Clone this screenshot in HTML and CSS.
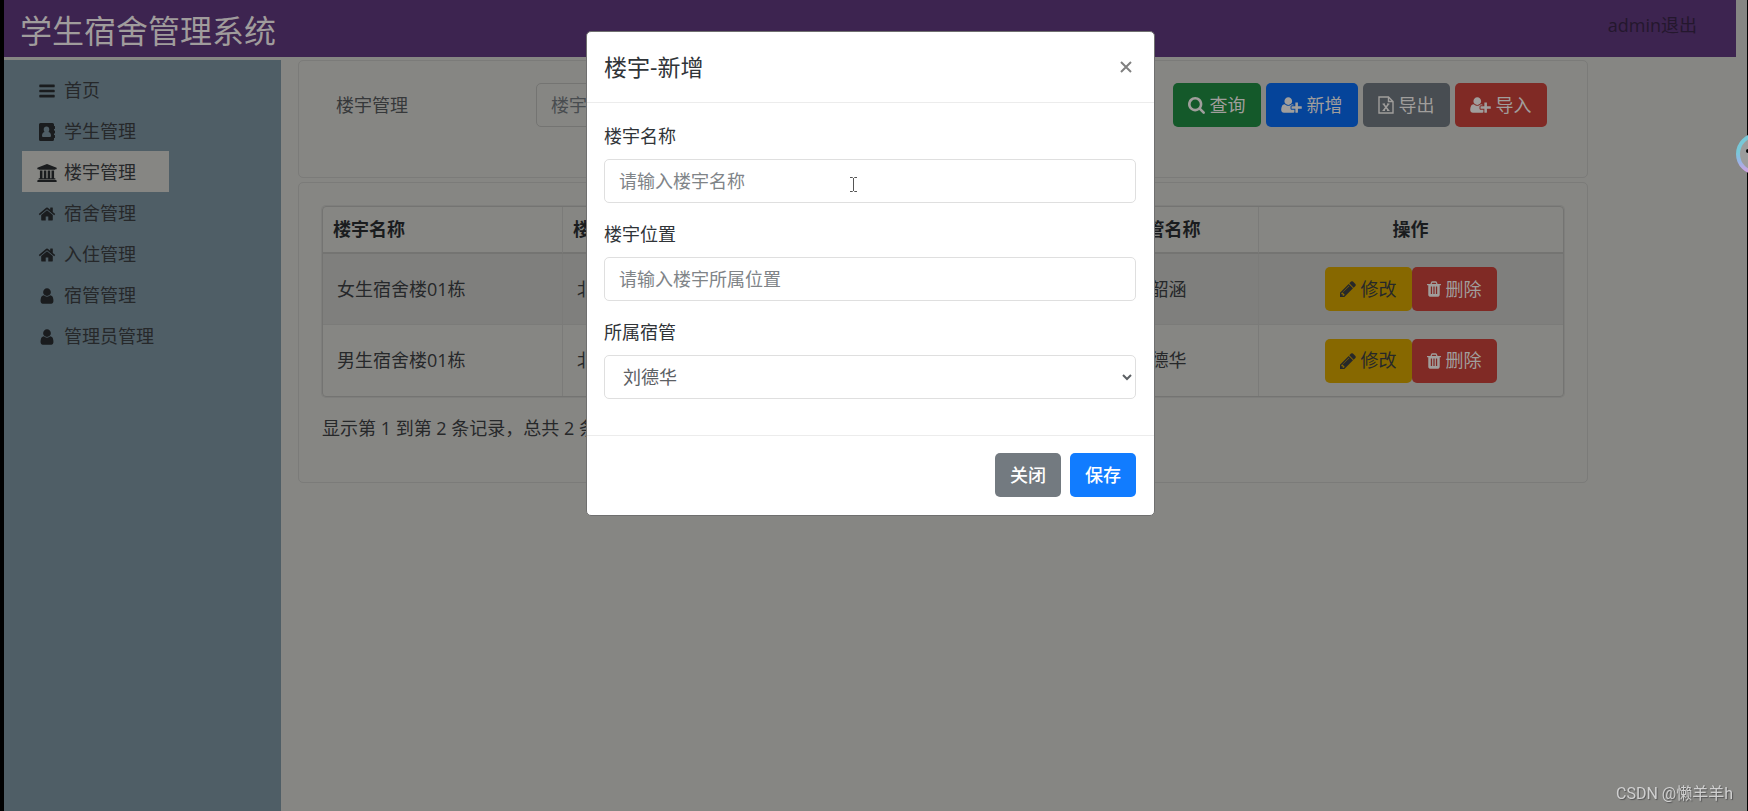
FILE: index.html
```html
<!DOCTYPE html>
<html lang="zh-CN">
<head>
<meta charset="utf-8">
<title>学生宿舍管理系统</title>
<link rel="stylesheet" href="styles.css">
</head>
<body>
<svg class="sprite" aria-hidden="true">
  <symbol id="bars" viewBox="0 0 1792 1792"><path d="M1664 1344v128q0 26-19 45t-45 19h-1408q-26 0-45-19t-19-45v-128q0-26 19-45t45-19h1408q26 0 45 19t19 45zm0-512v128q0 26-19 45t-45 19h-1408q-26 0-45-19t-19-45v-128q0-26 19-45t45-19h1408q26 0 45 19t19 45zm0-512v128q0 26-19 45t-45 19h-1408q-26 0-45-19t-19-45v-128q0-26 19-45t45-19h1408q26 0 45 19t19 45z"/></symbol>
  <symbol id="book" viewBox="0 0 18 18"><path fill-rule="evenodd" d="M2.500 0h12a1.500 1.500 0 0 1 1.500 1.500V3h.6q.4 0 .4.400v2.200q0 .4-.4.400H16v1.500h.6q.4 0 .4.400v2.200q0 .4-.4.400H16V12h.6q.4 0 .4.400v2.200q0 .4-.4.400H16v1.500a1.500 1.500 0 0 1-1.500 1.500h-12A1.500 1.500 0 0 1 1 16.500v-15A1.500 1.500 0 0 1 2.500 0zM8.500 3.500C6.800 3.500 5.700 4.800 5.700 6.500q0 1.500.8 2.400C4.500 9.500 4 11 4 13q0 1 1 1h7q1 0 1-1c0-2-.5-3.500-2.500-4.100q.8-.9.800-2.400C11.300 4.800 10.200 3.500 8.500 3.500z"/></symbol>
  <symbol id="university" viewBox="0 0 1920 1792"><path d="M960 0l960 384v128h-128q0 26-20.500 45t-48.500 19h-1526q-28 0-48.500-19t-20.500-45h-128v-128zm-704 640h256v768h128v-768h256v768h128v-768h256v768h128v-768h256v768h59q28 0 48.500 19t20.500 45v64h-1664v-64q0-26 20.500-45t48.500-19h59zm1595 960q28 0 48.500 19t20.500 45v128h-1920v-128q0-26 20.500-45t48.500-19z"/></symbol>
  <symbol id="home" viewBox="0 0 1792 1792"><path d="M1472 992v480q0 26-19 45t-45 19h-384v-384h-256v384h-384q-26 0-45-19t-19-45v-480q0-1 .5-3t.5-3l575-474 575 474q1 2 1 6zm223-69l-62 74q-8 9-21 11h-3q-13 0-21-7l-692-577-692 577q-12 8-24 7-13-2-21-11l-62-74q-8-10-7-23.500t11-21.500l719-599q32-26 76-26t76 26l244 204v-195q0-14 9-23t23-9h192q14 0 23 9t9 23v408l219 182q10 8 11 21.500t-7 23.500z"/></symbol>
  <symbol id="user" viewBox="0 0 1792 1792"><path d="M1536 1399q0 109-62.500 187t-150.500 78h-854q-88 0-150.500-78t-62.500-187q0-85 8.500-160.500t31.500-152 58.500-131 94-89 134.500-34.500q131 128 313 128t313-128q76 0 134.500 34.500t94 89 58.500 131 31.500 152 8.500 160.500zm-256-887q0 159-112.500 271.500t-271.500 112.500-271.500-112.500-112.500-271.500 112.500-271.500 271.500-112.500 271.500 112.500 112.500 271.500z"/></symbol>
  <symbol id="search" viewBox="64 128 1664 1664"><path d="M1216 832q0-185-131.500-316.500t-316.500-131.500-316.500 131.500-131.500 316.500 131.500 316.500 316.500 131.500 316.500-131.500 131.500-316.500zm512 832q0 52-38 90t-90 38q-54 0-90-38l-343-342q-179 124-399 124-143 0-273.500-55.500t-225-150-150-225-55.500-273.500 55.500-273.500 150-225 225-150 273.500-55.500 273.500 55.500 225 150 150 225 55.500 273.500q0 220-124 399l343 343q37 37 37 90z"/></symbol>
  <symbol id="user-plus" viewBox="0 0 2048 1792"><path d="M704 896q-159 0-271.500-112.500t-112.500-271.500 112.500-271.500 271.500-112.500 271.500 112.500 112.500 271.500-112.500 271.500-271.500 112.500zm960 128h352q13 0 22.500 9.500t9.500 22.500v192q0 13-9.500 22.500t-22.500 9.500h-352v352q0 13-9.500 22.500t-22.500 9.500h-192q-13 0-22.500-9.500t-9.500-22.500v-352h-352q-13 0-22.500-9.500t-9.500-22.500v-192q0-13 9.500-22.500t22.500-9.500h352v-352q0-13 9.500-22.500t22.500-9.500h192q13 0 22.500 9.500t9.500 22.500zm-736 224q0 52 38 90t90 38h256v238q-68 50-171 50h-874q-121 0-194-69t-73-190q0-53 3.500-103.500t14-109 26.500-108.500 43-97.500 62-81 85.500-53.500 111.500-20q19 0 39 17 79 61 154.500 91.500t164.500 30.500 164.500-30.500 154.500-91.500q20-17 39-17 132 0 217 96h-223q-52 0-90 38t-38 90z"/></symbol>
  <symbol id="excel" viewBox="0 0 16 18"><g fill="none" stroke="currentColor" stroke-width="1.400"><path d="M1 1h9.500L15 5.500V17H1zM10.500 1v4.500H15"/><path d="M5.500 8l5 6.500M10.500 8l-5 6.500" stroke-width="1.500"/><path d="M4.500 8h2.500M9 8h2.500M4.500 14.500H7M9 14.500h2.500" stroke-width="1"/></g></symbol>
  <symbol id="pencil" viewBox="128 128 1536 1536"><path d="M491 1536l91-91-235-235-91 91v107h128v128h107zm523-928q0-22-22-22-10 0-17 7l-542 542q-7 7-7 17 0 22 22 22 10 0 17-7l542-542q7-7 7-17zm-54-192l416 416-832 832h-416v-416zm683 96q0 53-37 90l-166 166-416-416 166-165q36-38 90-38 53 0 91 38l235 234q37 39 37 91z"/></symbol>
  <symbol id="trash" viewBox="192 128 1408 1536"><path d="M704 1376v-704q0-14-9-23t-23-9h-64q-14 0-23 9t-9 23v704q0 14 9 23t23 9h64q14 0 23-9t9-23zm256 0v-704q0-14-9-23t-23-9h-64q-14 0-23 9t-9 23v704q0 14 9 23t23 9h64q14 0 23-9t9-23zm256 0v-704q0-14-9-23t-23-9h-64q-14 0-23 9t-9 23v704q0 14 9 23t23 9h64q14 0 23-9t9-23zm-544-992h448l-48-117q-7-9-17-11h-317q-10 2-17 11zm928 32v64q0 14-9 23t-23 9h-96v948q0 83-47 143.500t-113 60.500h-832q-66 0-113-58.500t-47-141.500v-952h-96q-14 0-23-9t-9-23v-64q0-14 9-23t23-9h309l70-167q15-37 54-63t79-26h320q40 0 79 26t54 63l70 167h309q14 0 23 9t9 23z"/></symbol>
</svg>

<header class="topbar">
  <h1 class="brand">学生宿舍管理系统</h1>
  <div class="account">admin<a href="#">退出</a></div>
</header>

<div class="layout">
  <nav class="sidebar">
    <a class="menu-item" href="#"><svg class="menu-icon"><use href="#bars"/></svg>首页</a>
    <a class="menu-item" href="#"><svg class="menu-icon"><use href="#book"/></svg>学生管理</a>
    <a class="menu-item active" href="#"><svg class="menu-icon"><use href="#university"/></svg>楼宇管理</a>
    <a class="menu-item" href="#"><svg class="menu-icon"><use href="#home"/></svg>宿舍管理</a>
    <a class="menu-item" href="#"><svg class="menu-icon"><use href="#home"/></svg>入住管理</a>
    <a class="menu-item" href="#"><svg class="menu-icon"><use href="#user"/></svg>宿管管理</a>
    <a class="menu-item" href="#"><svg class="menu-icon"><use href="#user"/></svg>管理员管理</a>
  </nav>

  <main class="content">
    <form class="card search">
      <label class="search-label" for="keyword">楼宇管理</label>
      <input class="control search-input" id="keyword" type="text" placeholder="楼宇名称">
      <div class="tools">
        <button type="button" class="btn green"><svg class="i17"><use href="#search"/></svg>查询</button>
        <button type="button" class="btn blue"><svg class="i21"><use href="#user-plus"/></svg>新增</button>
        <button type="button" class="btn gray"><svg class="i16"><use href="#excel"/></svg>导出</button>
        <button type="button" class="btn red"><svg class="i21"><use href="#user-plus"/></svg>导入</button>
      </div>
    </form>

    <section class="card list">
      <table class="grid">
        <thead>
          <tr><th class="c-name">楼宇名称</th><th>楼宇位置</th><th class="c-keeper">宿管名称</th><th class="c-ops">操作</th></tr>
        </thead>
        <tbody>
          <tr>
            <td>女生宿舍楼01栋</td><td>北区</td><td>张韶涵</td>
            <td class="ops"><div class="pair"><button type="button" class="btn yellow"><svg class="i16"><use href="#pencil"/></svg>修改</button><button type="button" class="btn red"><svg class="i14"><use href="#trash"/></svg>删除</button></div></td>
          </tr>
          <tr>
            <td>男生宿舍楼01栋</td><td>北区</td><td>刘德华</td>
            <td class="ops"><div class="pair"><button type="button" class="btn yellow"><svg class="i16"><use href="#pencil"/></svg>修改</button><button type="button" class="btn red"><svg class="i14"><use href="#trash"/></svg>删除</button></div></td>
          </tr>
        </tbody>
      </table>
      <p class="summary">显示第 1 到第 2 条记录，总共 2 条记录</p>
    </section>
  </main>
</div>

<div class="overlay">
  <form class="modal" role="dialog" aria-labelledby="modal-title">
    <div class="modal-head">
      <h2 class="modal-title" id="modal-title">楼宇-新增</h2>
      <button type="button" class="close" aria-label="关闭"><svg viewBox="0 0 12 12"><path d="M1 1l10 10M11 1L1 11"/></svg></button>
    </div>
    <div class="modal-body">
      <div class="field">
        <label for="name">楼宇名称</label>
        <input class="control" id="name" type="text" placeholder="请输入楼宇名称">
      </div>
      <div class="field">
        <label for="place">楼宇位置</label>
        <input class="control" id="place" type="text" placeholder="请输入楼宇所属位置">
      </div>
      <div class="field">
        <label for="keeper">所属宿管</label>
        <select class="control" id="keeper"><option>刘德华</option><option>张韶涵</option></select>
      </div>
    </div>
    <div class="modal-foot">
      <button type="button" class="btn dismiss">关闭</button>
      <button type="button" class="btn save">保存</button>
    </div>
  </form>
</div>

<svg class="pointer" viewBox="0 0 9 17"><path d="M1 1.500h2.500l1 1 1-1H8M4.500 2v13M1 15.500h2.500l1-1 1 1H8"/></svg>
<svg class="helper" viewBox="0 0 42 42">
  <defs><linearGradient id="ring" x1="0" y1="0" x2="0" y2="1"><stop offset=".45" stop-color="#78c8d8"/><stop offset=".7" stop-color="#96b4e6"/><stop offset="1" stop-color="#d8a0e0"/></linearGradient></defs>
  <circle cx="21" cy="21" r="19" fill="#9c9c9c" stroke="url(#ring)" stroke-width="4"/>
  <circle cx="12" cy="18" r="2" fill="#000"/>
</svg>
<div class="watermark">CSDN @懒羊羊h</div>
</body>
</html>
```

FILE: styles.css
```css
* { box-sizing: border-box; }

body {
  margin: 0;
  min-height: 100vh;
  display: flex;
  flex-direction: column;
  border-left: 4px solid #000;
  border-right: 1px solid #000;
  background: #868683;
  color: #26282a;
  font: 18px/27px "Open Sans", "Noto Sans CJK SC", sans-serif;
  overflow: hidden;
}

button, input, select { font: inherit; }
a { color: inherit; text-decoration: none; }
h1, h2, p { margin: 0; font-weight: inherit; }
.sprite { position: absolute; width: 0; height: 0; }
svg { fill: currentColor; flex: none; }

.topbar {
  display: flex;
  justify-content: space-between;
  margin-right: 11px;
  height: 57px;
  padding: 0 39px 0 16px;
  background: #3d2450;
}
.brand { font-size: 32px; line-height: 62px; color: #a09c9c; }
.account { line-height: 50px; color: #24172d; }

.layout { flex: 1; display: flex; padding-top: 3px; }
.sidebar { width: 277px; padding: 9px 18px; background: #4f5e66; }
.menu-item {
  display: flex;
  align-items: center;
  gap: 7px;
  width: 147px;
  height: 41px;
  padding: 2px 0 0 15px;
  white-space: nowrap;
}
.menu-item.active { background: #868683; }
.menu-icon { width: 20px; height: 18px; color: #1a1c1e; }

.content { flex: 1; padding-left: 17px; }
.card { width: 89%; border: 1px solid #7b7b79; border-radius: 5px; }
.search {
  display: flex;
  align-items: flex-start;
  margin-bottom: 4px;
  padding: 22px 40px 50px 37px;
}
.search-label { width: 200px; line-height: 44px; color: #36383a; }
.search-input { flex: 1; max-width: 400px; }
.search-input::placeholder { color: #484c4f; }
.tools { display: flex; gap: 5px; margin-left: auto; }

.control {
  width: 100%;
  height: 44px;
  padding: 0 14px;
  border: 1px solid #dfdfdf;
  border-radius: 5px;
  background: transparent;
  color: #5c6064;
}
.search .control { width: auto; border-color: #747472; }

.btn {
  display: inline-flex;
  align-items: center;
  justify-content: center;
  gap: 5px;
  height: 44px;
  padding: 0 14px;
  border: 1px solid transparent;
  border-radius: 5px;
  color: #a09e9c;
  white-space: nowrap;
}
.green { background: #14592a; }
.blue { background: #05449a; }
.gray { background: #484d52; }
.red { background: #802a25; }
.yellow { background: #876800; color: #26282a; }
.i14 { width: 14px; height: 16px; }
.i16 { width: 16px; height: 18px; }
.i17 { width: 17px; height: 17px; }
.i21 { width: 21px; height: 18px; }

.list { padding: 23px 23px 24px; }
.grid {
  width: 100%;
  border: 1px solid #747472;
  border-radius: 4px;
  border-spacing: 0;
  table-layout: fixed;
  box-shadow: 0 0 0 1px #7e7e7c;
}
.grid th, .grid td { text-align: left; border-right: 1px solid #7b7b79; }
.grid tr > :last-child { border-right: 0; text-align: center; }
.grid th { height: 47px; padding: 0 10px; color: #1a1c1e; font-weight: 700; border-bottom: 2px solid #747472; }
.grid td { height: 71px; padding: 0 14px; }
.grid tbody tr:first-child td { background: #7f7f7d; border-bottom: 1px solid #7b7b79; }
.c-name { width: 240px; }
.c-keeper { width: 140px; }
.c-ops { width: 304px; }
.pair { display: inline-flex; vertical-align: middle; }
.summary { padding: 18px 0 16px; }

.overlay {
  position: fixed;
  inset: 0;
  display: flex;
  justify-content: center;
  align-items: flex-start;
  padding: 31px 7px 0 0;
}
.modal {
  width: 569px;
  border: 1px solid #6f6f6f;
  border-radius: 5px;
  background: #fff;
  color: #303438;
}
.modal-head {
  display: flex;
  justify-content: space-between;
  align-items: center;
  height: 71px;
  padding: 0 22px 0 17px;
  border-bottom: 1px solid #ececec;
}
.modal-title { font-size: 23px; line-height: 34px; }
.close { display: flex; padding: 0; border: 0; background: none; }
.close svg { width: 12px; height: 12px; fill: none; stroke: #808080; stroke-width: 2; }
.modal-body {
  display: grid;
  gap: 18px;
  padding: 20px 18px 36px 17px;
  border-bottom: 1px solid #ececec;
}
.field { display: grid; gap: 9px; }
.modal .control::placeholder { color: #808488; opacity: 1; }
.modal select.control { background: #fff; padding: 0 3px 0 14px; }
.modal-foot { display: flex; justify-content: flex-end; gap: 9px; padding: 17px 18px 18px; }
.modal-foot .btn { color: #fff; font-weight: 500; }
.dismiss { background: #737a80; }
.save { background: #117cff; }

.pointer { position: fixed; left: 849px; top: 176px; width: 9px; height: 17px; fill: none; stroke: #555; }
.helper { position: fixed; right: -30px; top: 133px; width: 42px; height: 42px; }
.watermark {
  position: fixed;
  right: 15px;
  bottom: 5px;
  font: 16px/24px Roboto, "Noto Sans CJK SC", sans-serif;
  color: #d0d0d0;
  text-shadow: 1px 1px 1px #555;
}
```
